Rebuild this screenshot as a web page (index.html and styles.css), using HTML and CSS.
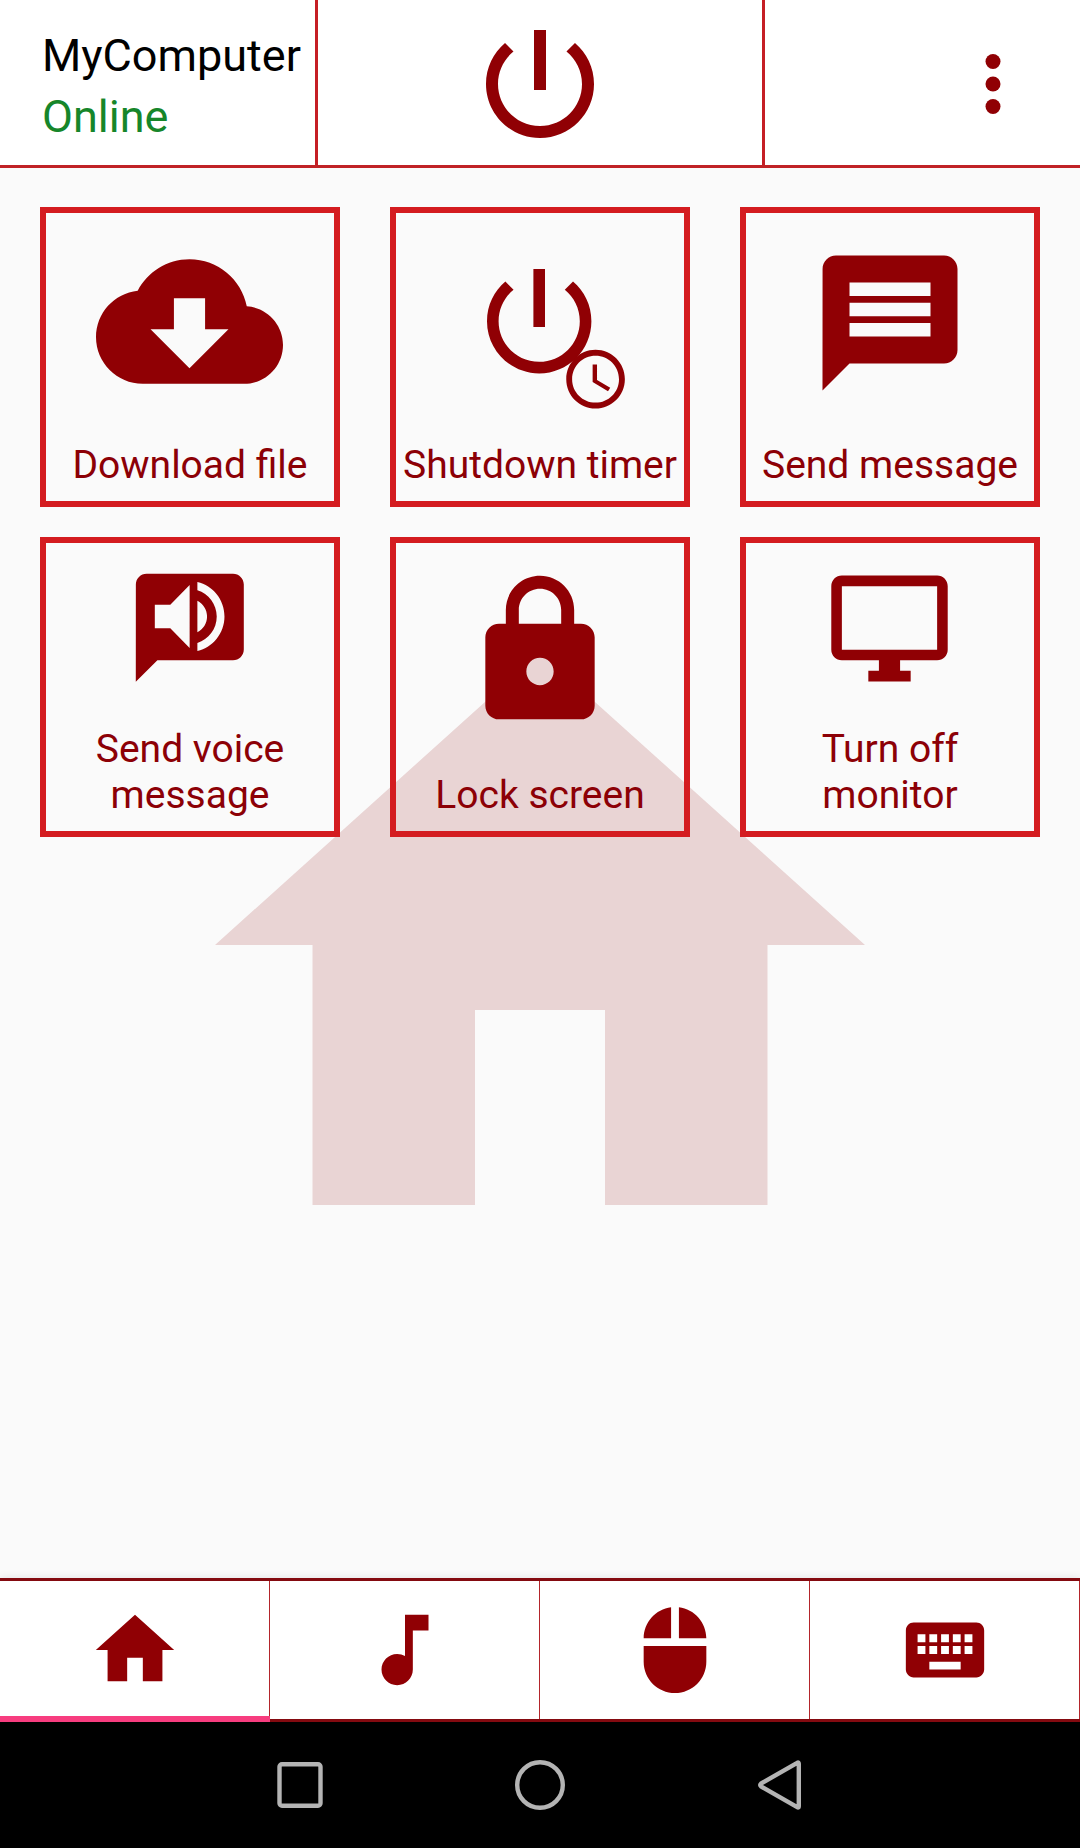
FILE: index.html
```html
<!DOCTYPE html>
<html lang="en">
<head>
  <meta charset="UTF-8" />
  <title>MyComputer</title>
  <link rel="stylesheet" href="styles.css">
</head>
<body>

  <div class="header">
    <div class="computer">
      <div class="computer-name">MyComputer</div>
      <div class="computer-status">Online</div>
    </div>
    <div class="power">
      <svg class="power-icon" viewBox="0 0 24 24"><path d="M13 3h-2v10h2V3zm4.83 2.17l-1.42 1.42C17.99 7.86 19 9.81 19 12c0 3.87-3.13 7-7 7s-7-3.13-7-7c0-2.19 1.01-4.14 2.58-5.42L6.17 5.17C4.23 6.82 3 9.26 3 12c0 4.97 4.03 9 9 9s9-4.03 9-9c0-2.74-1.23-5.18-3.17-6.83z"/></svg>
    </div>
    <div class="more">
      <svg class="more-icon" viewBox="0 0 24 24"><circle cx="12" cy="6" r="2"/><circle cx="12" cy="12" r="2"/><circle cx="12" cy="18" r="2"/></svg>
    </div>
  </div>

  <div class="content">
    <!-- Watermark of the current tab -->
    <svg class="watermark" viewBox="0 0 24 24"><path d="M10 20v-6h4v6h5v-8h3L12 3 2 12h3v8z"/></svg>

    <div class="tiles">
      <div class="tile">
        <div class="tile-icon">
          <svg class="icon-cloud" viewBox="0 0 24 24"><path d="M19.35 10.04C18.67 6.59 15.64 4 12 4 9.11 4 6.6 5.64 5.35 8.04 2.34 8.36 0 10.91 0 14c0 3.31 2.69 6 6 6h13c2.76 0 5-2.24 5-5 0-2.64-2.05-4.78-4.65-4.96zM17 13l-5 5-5-5h3V9h4v4h3z"/></svg>
        </div>
        <div class="tile-label">Download file</div>
      </div>

      <div class="tile">
        <div class="tile-icon">
          <svg class="icon-timer" viewBox="0 0 180 180">
            <path transform="translate(19.6 19.6) scale(5.8)" d="M13 3h-2v10h2V3zm4.83 2.17l-1.42 1.42C17.99 7.86 19 9.81 19 12c0 3.87-3.13 7-7 7s-7-3.13-7-7c0-2.19 1.01-4.14 2.58-5.42L6.17 5.17C4.23 6.82 3 9.26 3 12c0 4.97 4.03 9 9 9s9-4.03 9-9c0-2.74-1.23-5.18-3.17-6.83z"/>
            <path transform="translate(110.4 112) scale(2.93)" d="M11.99 2C6.47 2 2 6.48 2 12s4.47 10 9.99 10C17.52 22 22 17.52 22 12S17.52 2 11.99 2zM12 20c-4.42 0-8-3.58-8-8s3.58-8 8-8 8 3.58 8 8-3.58 8-8 8zM12.5 7H11v6l5.25 3.15.75-1.23-4.5-2.67z"/>
          </svg>
        </div>
        <div class="tile-label">Shutdown timer</div>
      </div>

      <div class="tile">
        <div class="tile-icon">
          <svg class="icon-message" viewBox="0 0 24 24"><path d="M20 2H4c-1.1 0-1.99.9-1.99 2L2 22l4-4h14c1.1 0 2-.9 2-2V4c0-1.1-.9-2-2-2zm-2 12H6v-2h12v2zm0-3H6V9h12v2zm0-3H6V6h12v2z"/></svg>
        </div>
        <div class="tile-label">Send message</div>
      </div>

      <div class="tile">
        <div class="tile-icon">
          <svg class="icon-voice" viewBox="0 0 130 130">
            <path transform="scale(5.4)" d="M20 2H4c-1.1 0-1.99.9-1.99 2L2 22l4-4h14c1.1 0 2-.9 2-2V4c0-1.1-.9-2-2-2z"/>
            <path class="speaker" transform="translate(18.2 6.4) scale(3.87 3.93)" d="M3 9v6h4l5 5V4L7 9H3zm13.5 3c0-1.77-1.02-3.29-2.5-4.03v8.05c1.48-.73 2.5-2.25 2.5-4.02zM14 3.23v2.06c2.89.86 5 3.54 5 6.71s-2.11 5.85-5 6.71v2.06c4.01-.91 7-4.49 7-8.77s-2.99-7.86-7-8.77z"/>
          </svg>
        </div>
        <div class="tile-label">Send voice<br>message</div>
      </div>

      <div class="tile">
        <div class="tile-icon">
          <svg class="icon-lock" viewBox="0 0 24 24"><path d="M18 8h-1V6c0-2.76-2.24-5-5-5S7 3.24 7 6v2H6c-1.1 0-2 .9-2 2v10c0 1.1.9 2 2 2h12c1.1 0 2-.9 2-2V10c0-1.1-.9-2-2-2zm-6 9c-1.1 0-2-.9-2-2s.9-2 2-2 2 .9 2 2-.9 2-2 2zm3.1-9H8.9V6c0-1.71 1.39-3.1 3.1-3.1 1.71 0 3.1 1.39 3.1 3.1v2z"/></svg>
        </div>
        <div class="tile-label">Lock screen</div>
      </div>

      <div class="tile">
        <div class="tile-icon">
          <svg class="icon-monitor" viewBox="0 0 24 24"><path d="M21 2H3c-1.1 0-2 .9-2 2v12c0 1.1.9 2 2 2h7v2H8v2h8v-2h-2v-2h7c1.1 0 2-.9 2-2V4c0-1.1-.9-2-2-2zm0 14H3V4h18v12z"/></svg>
        </div>
        <div class="tile-label">Turn off<br>monitor</div>
      </div>
    </div>
  </div>

  <div class="tabs">
    <div class="tab active">
      <svg class="tab-icon" viewBox="0 0 24 24"><path d="M10 20v-6h4v6h5v-8h3L12 3 2 12h3v8z"/></svg>
    </div>
    <div class="tab">
      <svg class="tab-icon" viewBox="0 0 24 24"><path d="M12 3v10.55c-.59-.34-1.27-.55-2-.55-2.21 0-4 1.79-4 4s1.79 4 4 4 4-1.79 4-4V7h4V3h-6z"/></svg>
    </div>
    <div class="tab">
      <svg class="tab-icon" viewBox="0 0 24 24"><path d="M13 1.07V9h7c0-4.08-3.05-7.44-7-7.93zM4 15c0 4.42 3.58 8 8 8s8-3.58 8-8v-4H4v4zm7-13.93C7.05 1.56 4 4.92 4 9h7V1.07z"/></svg>
    </div>
    <div class="tab">
      <svg class="tab-icon" viewBox="0 0 24 24"><path d="M20 5H4c-1.1 0-1.99.9-1.99 2L2 17c0 1.1.9 2 2 2h16c1.1 0 2-.9 2-2V7c0-1.1-.9-2-2-2zm-9 3h2v2h-2V8zm0 3h2v2h-2v-2zM8 8h2v2H8V8zm0 3h2v2H8v-2zm-1 2H5v-2h2v2zm0-3H5V8h2v2zm9 7H8v-2h8v2zm0-4h-2v-2h2v2zm0-3h-2V8h2v2zm3 3h-2v-2h2v2zm0-3h-2V8h2v2z"/></svg>
    </div>
  </div>

  <!-- System navigation -->
  <div class="navbar">
    <svg class="nav-icon" viewBox="0 0 60 60"><rect x="9.5" y="9.2" width="41" height="41.6" rx="2.5"/></svg>
    <svg class="nav-icon" viewBox="0 0 60 60"><circle cx="30" cy="30" r="22.8"/></svg>
    <svg class="nav-icon" viewBox="0 0 60 60"><path d="M47.2 7.8Q48.8 6.8 48.8 8.8V51.2Q48.8 53.2 47.2 52.2L11 31.4Q9.4 30 11 28.6Z"/></svg>
  </div>

</body>
</html>
```

FILE: styles.css
```css
body {
  margin: 0;
  height: 1848px;
  display: flex;
  flex-direction: column;
  font-family: Roboto, sans-serif;
  background-color: #fafafa;
  overflow: hidden;
}

svg {
  display: block;
  fill: #900004;
}

.header {
  display: flex;
  height: 165px;
  background-color: white;
  border-bottom: 3px solid #c02226;
}

.computer {
  box-sizing: border-box;
  width: 318px;
  padding: 25px 0 0 42px;
  border-right: 3px solid #c51f25;
  font-size: 45px;
  line-height: 61px;
  white-space: nowrap;
}

.computer-name {
  color: black;
}

.computer-status {
  color: #16862a;
}

.power {
  width: 444px;
  padding-top: 12px;
  border-right: 3px solid #c51f25;
}

.power-icon {
  width: 144px;
  height: 144px;
  margin: 0 auto;
}

.more {
  flex: 1;
  display: flex;
  justify-content: flex-end;
  padding: 39px 42px 0 0;
}

.more-icon {
  width: 90px;
  height: 90px;
}

.content {
  position: relative;
  flex: 1;
}

.watermark {
  position: absolute;
  top: 387px;
  left: 150px;
  width: 780px;
  height: 780px;
  fill: #e9d4d4;
}

.tiles {
  position: relative;
  display: grid;
  grid-template-columns: repeat(3, 300px);
  gap: 30px 50px;
  padding: 39px 40px;
}

.tile {
  box-sizing: border-box;
  height: 300px;
  display: flex;
  flex-direction: column;
  border: 6px solid #d41c20;
}

.tile-icon {
  flex: 1;
  display: flex;
  align-items: center;
  justify-content: center;
}

.tile-label {
  padding: 12px 0 13px;
  color: #8c0006;
  font-size: 39px;
  line-height: 46px;
  text-align: center;
  white-space: nowrap;
}

.icon-cloud {
  width: 187px;
  height: 187px;
  margin-right: 1px;
}

.icon-timer {
  width: 180px;
  height: 180px;
}

.icon-message {
  width: 162px;
  height: 162px;
  margin-top: 2px;
}

.icon-voice {
  width: 130px;
  height: 130px;
  margin: 0 1px 1px 0;
}

.icon-lock {
  width: 164px;
  height: 164px;
  margin-bottom: 2px;
}

.icon-monitor {
  width: 127px;
  height: 127px;
  margin-right: 1px;
}

.speaker {
  fill: #fafafa;
}

.tabs {
  position: relative;
  display: flex;
  height: 144px;
  background-color: white;
  box-shadow: 0 0 8px rgba(0, 0, 0, 0.1);
}

.tab {
  box-sizing: border-box;
  width: 270px;
  display: flex;
  align-items: center;
  justify-content: center;
  border-top: 3px solid #840a10;
  border-bottom: 3px solid #840a10;
  box-shadow: inset -1px 0 #b3252b;
}

.tab.active {
  padding-top: 3px;
  border-bottom: 6px solid #f73d7f;
}

.tab-icon {
  width: 94px;
  height: 94px;
}

.navbar {
  position: relative;
  display: flex;
  align-items: center;
  justify-content: center;
  gap: 180px;
  height: 126px;
  background-color: black;
}

.nav-icon {
  width: 60px;
  height: 60px;
  fill: none;
  stroke: #b4b4b4;
  stroke-width: 4.4;
}
```
